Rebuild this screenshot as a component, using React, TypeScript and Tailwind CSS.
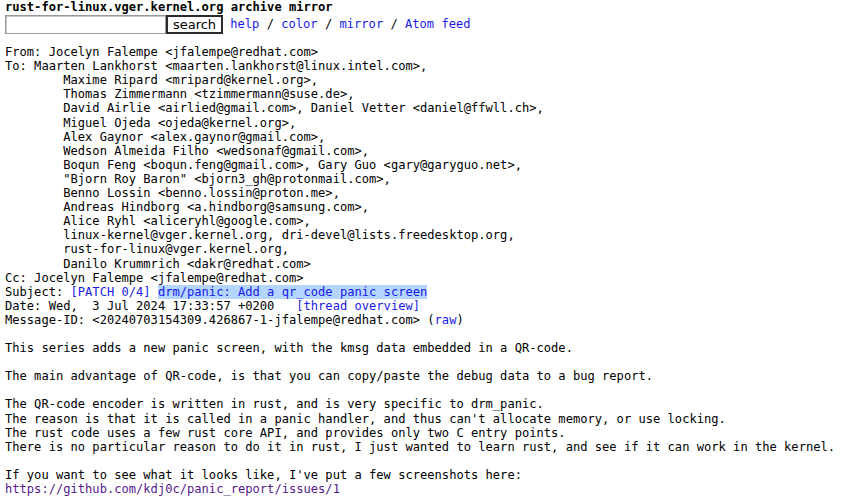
const link = "text-[#1a1ae6]";

const recipients = [
  "Maarten Lankhorst <maarten.lankhorst@linux.intel.com>,",
  "Maxime Ripard <mripard@kernel.org>,",
  "Thomas Zimmermann <tzimmermann@suse.de>,",
  "David Airlie <airlied@gmail.com>, Daniel Vetter <daniel@ffwll.ch>,",
  "Miguel Ojeda <ojeda@kernel.org>,",
  "Alex Gaynor <alex.gaynor@gmail.com>,",
  "Wedson Almeida Filho <wedsonaf@gmail.com>,",
  "Boqun Feng <boqun.feng@gmail.com>, Gary Guo <gary@garyguo.net>,",
  '"Bjorn Roy Baron" <bjorn3_gh@protonmail.com>,',
  "Benno Lossin <benno.lossin@proton.me>,",
  "Andreas Hindborg <a.hindborg@samsung.com>,",
  "Alice Ryhl <aliceryhl@google.com>,",
  "linux-kernel@vger.kernel.org, dri-devel@lists.freedesktop.org,",
  "rust-for-linux@vger.kernel.org,",
  "Danilo Krummrich <dakr@redhat.com>",
];

const App = () => {
  return (
    <div className="min-h-[500px] bg-white px-[5px] text-black font-['DejaVu_Sans_Mono',monospace] text-[12.1px] leading-[14.1px]">
      <form onSubmit={(e) => e.preventDefault()}>
        <pre className="font-['DejaVu_Sans_Mono',monospace]">
          <b>rust-for-linux.vger.kernel.org archive mirror</b>
          {"\n"}
          <span className="inline-flex items-center align-middle mt-[1px]">
            <input
              type="text"
              className="w-[161px] h-[19px] border border-[#9a9a9a] bg-white shadow-[inset_1px_1px_0_#c8c8c8] outline-none"
            />
            <button
              type="submit"
              className="h-[19px] w-[57px] border-2 border-[#2a2a2a] bg-white text-[13px] leading-[15px] font-['DejaVu_Sans',sans-serif]"
            >
              search
            </button>
          </span>{" "}
          <a className={link}>help</a> / <a className={link}>color</a> /{" "}
          <a className={link}>mirror</a> / <a className={link}>Atom feed</a>
        </pre>
      </form>
      <pre className="mt-[11px] font-['DejaVu_Sans_Mono',monospace]">
        {"From: Jocelyn Falempe <jfalempe@redhat.com>\n"}
        {"To: " + recipients[0] + "\n"}
        {recipients.slice(1).map((r) => "        " + r + "\n").join("")}
        {"Cc: Jocelyn Falempe <jfalempe@redhat.com>\n"}
        {"Subject: "}
        <a className={link}>[PATCH 0/4]</a>{" "}
        <span className={`${link} bg-[#b4d5fe]`}>drm/panic: Add a qr_code panic screen</span>
        {"\nDate: Wed,  3 Jul 2024 17:33:57 +0200   "}
        <a className={link}>[thread overview]</a>
        {"\nMessage-ID: <20240703154309.426867-1-jfalempe@redhat.com> ("}
        <a className={link}>raw</a>
        {")\n\n"}
        {"This series adds a new panic screen, with the kmsg data embedded in a QR-code.\n\n"}
        {"The main advantage of QR-code, is that you can copy/paste the debug data to a bug report.\n\n"}
        {"The QR-code encoder is written in rust, and is very specific to drm_panic.\n"}
        {"The reason is that it is called in a panic handler, and thus can't allocate memory, or use locking.\n"}
        {"The rust code uses a few rust core API, and provides only two C entry points.\n"}
        {"There is no particular reason to do it in rust, I just wanted to learn rust, and see if it can work in the kernel.\n\n"}
        {"If you want to see what it looks like, I've put a few screenshots here:\n"}
        <a className="text-[#551a8b]">https://github.com/kdj0c/panic_report/issues/1</a>
        {"\n"}
      </pre>
    </div>
  );
};

export default App;
